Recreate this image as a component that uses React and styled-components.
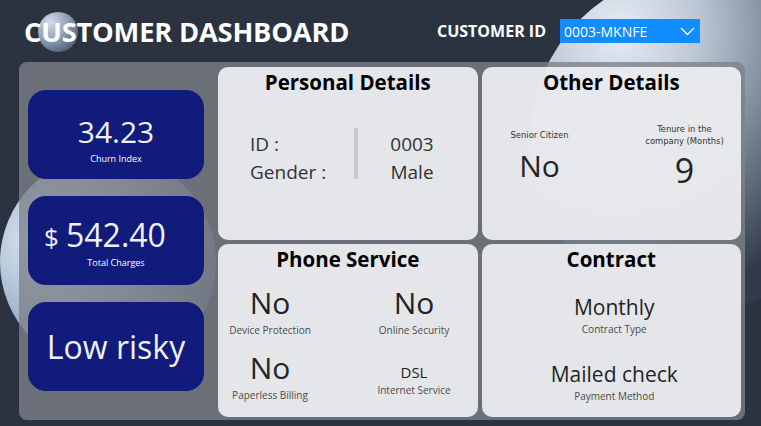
import React from "react";
import styled, { createGlobalStyle } from "styled-components";

const orbSvg = `<svg xmlns='http://www.w3.org/2000/svg' width='761' height='426' viewBox='0 0 761 426'>
<defs>
<radialGradient id='r' cx='0.26' cy='0.18' r='0.8'>
<stop offset='0' stop-color='#e6edf5'/>
<stop offset='0.3' stop-color='#bcc7d5'/>
<stop offset='0.65' stop-color='#6e7b8c'/>
<stop offset='1' stop-color='#323b4a'/>
</radialGradient>
<radialGradient id='l' cx='0.2' cy='0.4' r='0.85'>
<stop offset='0' stop-color='#dde8f5'/>
<stop offset='0.4' stop-color='#a7b9ce'/>
<stop offset='1' stop-color='#46566b'/>
</radialGradient>
<radialGradient id='s' cx='0.3' cy='0.25' r='0.85'>
<stop offset='0' stop-color='#d2dcea'/>
<stop offset='0.5' stop-color='#93a3b8'/>
<stop offset='1' stop-color='#4d5c72'/>
</radialGradient>
</defs>
<rect width='761' height='426' fill='#2b3240'/>
<circle cx='700' cy='140' r='170' fill='url(#r)'/>
<circle cx='108' cy='262' r='108' fill='url(#l)'/>
<circle cx='58' cy='32' r='20' fill='url(#s)'/>
</svg>`;

const backdrop = `url("data:image/svg+xml,${encodeURIComponent(orbSvg)}")`;

const GlobalStyle = createGlobalStyle`
  html, body { margin: 0; padding: 0; background: #2b3240; }
  * { box-sizing: border-box; }
`;

const Page = styled.div`
  width: 761px;
  height: 426px;
  overflow: hidden;
  display: flex;
  flex-direction: column;
  background: #2b3240 ${backdrop} no-repeat 0 0 / 761px 426px;
  font-family: "Open Sans", "Noto Sans", sans-serif;
`;

const Header = styled.header`
  height: 62px;
  display: grid;
  grid-template-columns: 401px 111px 140px;
  column-gap: 12px;
  align-items: center;
  padding-left: 24px;
`;

const Title = styled.h1`
  margin: 2px 0 0;
  font-size: 27.3px;
  font-weight: 700;
  line-height: 38px;
  color: #ffffff;
  white-space: nowrap;
  letter-spacing: -0.2px;
`;

const FilterLabel = styled.span`
  font-size: 16px;
  font-weight: 700;
  color: #ffffff;
  white-space: nowrap;
`;

const Select = styled.div`
  height: 24px;
  display: flex;
  align-items: center;
  justify-content: space-between;
  padding: 0 5px 0 4px;
  background: #118dff;
  color: #ffffff;
  font-size: 14px;
`;

const Panel = styled.main`
  margin: 0 16px 0 19px;
  height: 358px;
  border-radius: 8px;
  background: rgba(125, 130, 136, 0.78);
  display: grid;
  grid-template-columns: 176px 1fr;
  column-gap: 14px;
  padding: 5px 4px 3px 9px;
`;

const KpiColumn = styled.section`
  display: flex;
  flex-direction: column;
  gap: 17px;
  padding-top: 23px;
`;

const KpiCard = styled.div`
  height: 89px;
  border-radius: 18px;
  background: #101b7c;
  color: #f0f0f6;
  display: flex;
  flex-direction: column;
  align-items: center;
  justify-content: center;
  padding-top: ${(p) => p.$pt || 0}px;
`;

const KpiValue = styled.div`
  display: flex;
  align-items: baseline;
  gap: 7px;
  font-size: ${(p) => p.$size}px;
  line-height: 1.37;
  padding-right: ${(p) => p.$shift || 0}px;
`;

const Currency = styled.span`
  font-size: 26px;
`;

const KpiLabel = styled.div`
  font-size: 9px;
  line-height: 13px;
  color: #ffffff;
`;

const DetailGrid = styled.section`
  display: grid;
  grid-template-columns: 1fr 1fr;
  grid-template-rows: 173px 173px;
  gap: 4px;
`;

const Card = styled.div`
  background: rgba(242, 243, 245, 0.9);
  border-radius: 10px;
  display: flex;
  flex-direction: column;
  padding-top: 1px;
  color: #252423;
`;

const CardTitle = styled.h2`
  margin: 0 0 -2px;
  font-size: 20.5px;
  line-height: 28px;
  font-weight: 700;
  color: #000000;
  text-align: center;
`;

const PersonalBody = styled.div`
  display: flex;
  margin-top: 36px;
  padding-left: 32px;
  font-size: 19px;
  line-height: 28px;
  color: #333333;
`;

const KeyColumn = styled.div`
  width: 104px;
`;

const Divider = styled.div`
  width: 4px;
  height: 51px;
  margin-top: -2px;
  background: #c8c9cb;
`;

const ValueColumn = styled.div`
  width: 108px;
  text-align: center;
`;

const PairGrid = styled.div`
  display: grid;
  grid-template-columns: ${(p) => p.$col}px ${(p) => p.$col}px;
  column-gap: ${(p) => p.$gap}px;
  row-gap: ${(p) => p.$rowGap || 0}px;
  padding-left: 8px;
  margin-top: ${(p) => p.$top}px;
`;

const Stat = styled.div`
  display: flex;
  flex-direction: column;
  align-items: center;
  justify-content: ${(p) => p.$justify || "flex-end"};
  text-align: center;
  padding-bottom: ${(p) => p.$pb || 0}px;
`;

const StatCaption = styled.div`
  height: 27px;
  display: flex;
  flex-direction: column;
  justify-content: center;
  font-family: "DejaVu Sans Condensed", "DejaVu Sans", sans-serif;
  font-size: 9.3px;
  line-height: 12px;
  color: #333333;
`;

const BigValue = styled.div`
  font-size: ${(p) => p.$size}px;
  line-height: ${(p) => p.$lh}px;
  color: #252423;
  margin-top: ${(p) => p.$mt || 0}px;
`;

const SmallLabel = styled.div`
  font-size: 10px;
  line-height: 14px;
  color: #4a4a4a;
  white-space: nowrap;
`;

const ContractBody = styled.div`
  display: flex;
  flex-direction: column;
  align-items: center;
  gap: 24px;
  margin-top: 22px;
  padding-left: 6px;
`;

const Chevron = () => (
  <svg width="15" height="9" viewBox="0 0 15 9" fill="none">
    <polyline points="1,1 7.5,7.5 14,1" stroke="#ffffff" strokeWidth="1.3" />
  </svg>
);

export default function App() {
  return (
    <>
      <GlobalStyle />
      <Page>
        <Header>
          <Title>CUSTOMER DASHBOARD</Title>
          <FilterLabel>CUSTOMER ID</FilterLabel>
          <Select>
            <span>0003-MKNFE</span>
            <Chevron />
          </Select>
        </Header>
        <Panel>
          <KpiColumn>
            <KpiCard $pt={7}>
              <KpiValue $size={30}>34.23</KpiValue>
              <KpiLabel>Churn Index</KpiLabel>
            </KpiCard>
            <KpiCard $pt={1}>
              <KpiValue $size={32} $shift={22}>
                <Currency>$</Currency>
                <span>542.40</span>
              </KpiValue>
              <KpiLabel>Total Charges</KpiLabel>
            </KpiCard>
            <KpiCard>
              <KpiValue $size={32}>Low risky</KpiValue>
            </KpiCard>
          </KpiColumn>
          <DetailGrid>
            <Card>
              <CardTitle>Personal Details</CardTitle>
              <PersonalBody>
                <KeyColumn>
                  <div>ID :</div>
                  <div>Gender :</div>
                </KeyColumn>
                <Divider />
                <ValueColumn>
                  <div>0003</div>
                  <div>Male</div>
                </ValueColumn>
              </PersonalBody>
            </Card>
            <Card>
              <CardTitle>Other Details</CardTitle>
              <PairGrid $col={100} $gap={45} $top={27}>
                <Stat $justify="flex-start">
                  <StatCaption>Senior Citizen</StatCaption>
                  <BigValue $size={30} $lh={41} $mt={-3}>No</BigValue>
                </Stat>
                <Stat $justify="flex-start">
                  <StatCaption>
                    <div>Tenure in the</div>
                    <div>company (Months)</div>
                  </StatCaption>
                  <BigValue $size={34} $lh={47} $mt={-1}>9</BigValue>
                </Stat>
              </PairGrid>
            </Card>
            <Card>
              <CardTitle>Phone Service</CardTitle>
              <PairGrid $col={88} $gap={56} $top={11} $rowGap={10}>
                <Stat>
                  <BigValue $size={30} $lh={41}>No</BigValue>
                  <SmallLabel>Device Protection</SmallLabel>
                </Stat>
                <Stat>
                  <BigValue $size={30} $lh={41}>No</BigValue>
                  <SmallLabel>Online Security</SmallLabel>
                </Stat>
                <Stat>
                  <BigValue $size={30} $lh={41}>No</BigValue>
                  <SmallLabel>Paperless Billing</SmallLabel>
                </Stat>
                <Stat $pb={5}>
                  <BigValue $size={15} $lh={21}>DSL</BigValue>
                  <SmallLabel>Internet Service</SmallLabel>
                </Stat>
              </PairGrid>
            </Card>
            <Card>
              <CardTitle>Contract</CardTitle>
              <ContractBody>
                <Stat>
                  <BigValue $size={21} $lh={29}>Monthly</BigValue>
                  <SmallLabel>Contract Type</SmallLabel>
                </Stat>
                <Stat>
                  <BigValue $size={21} $lh={29}>Mailed check</BigValue>
                  <SmallLabel>Payment Method</SmallLabel>
                </Stat>
              </ContractBody>
            </Card>
          </DetailGrid>
        </Panel>
      </Page>
    </>
  );
}
